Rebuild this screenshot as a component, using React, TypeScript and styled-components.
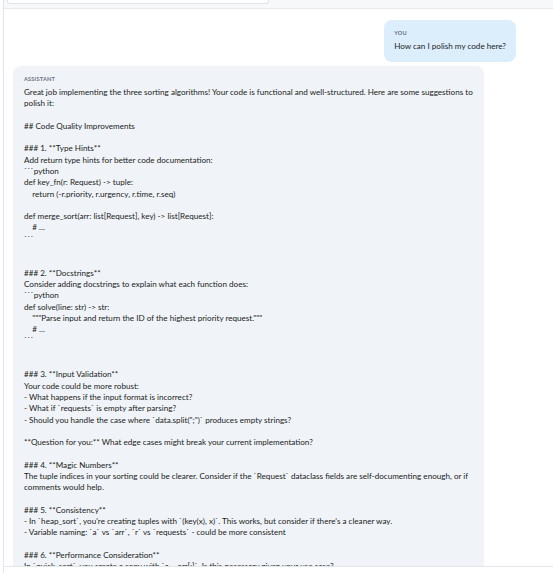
import styled, { createGlobalStyle } from "styled-components";

const GlobalStyle = createGlobalStyle`
  html, body {
    margin: 0;
    padding: 0;
    background: #ffffff;
    height: 100%;
    overflow: hidden;
  }
  #root {
    height: 100%;
  }
`;

const Shell = styled.div`
  height: 573px;
  margin-left: 3px;
  border-left: 1px solid #e2e5ea;
  display: flex;
  flex-direction: column;
  font-family: Lato, "Open Sans", sans-serif;
  color: #1a1d21;
  overflow: hidden;
`;

const TopStrip = styled.div`
  flex: none;
  height: 8px;
  background: #f7f8fa;
  border-bottom: 1px solid #e7e9ed;
  padding-left: 3px;
  display: flex;
  align-items: flex-start;
`;

const TopCard = styled.div`
  width: 260px;
  height: 3px;
  background: #ffffff;
  border: 1px solid #e1e4e9;
  border-top: none;
  border-radius: 0 0 3px 3px;
`;

const Messages = styled.div`
  flex: 1;
  min-height: 0;
  overflow: hidden;
  padding: 11px 37px 0 9px;
  display: flex;
  flex-direction: column;
  gap: 4px;
`;

const Bubble = styled.div<{ $user?: boolean }>`
  box-sizing: border-box;
  align-self: ${(p) => (p.$user ? "flex-end" : "flex-start")};
  width: ${(p) => (p.$user ? "auto" : "471px")};
  background: ${(p) => (p.$user ? "#dcedfc" : "#f0f3f8")};
  border-radius: 8px;
  padding: ${(p) => (p.$user ? "7px 10px 9px 10px" : "7px 11px 12px 11px")};
  font-size: 8.1px;
  line-height: 11.3px;
`;

const Role = styled.div`
  font-size: 5.6px;
  font-weight: 700;
  letter-spacing: 0.2px;
  text-transform: uppercase;
  color: #6b7280;
  margin-bottom: 3px;
`;

const Body = styled.div`
  white-space: pre-wrap;
  word-wrap: break-word;
`;

const Footer = styled.div`
  flex: none;
  height: 6px;
  background: #ffffff;
  border-top: 1px solid #e4e6ea;
`;

const reply = `Great job implementing the three sorting algorithms! Your code is functional and well-structured. Here are some suggestions to polish it:

## Code Quality Improvements

### 1. **Type Hints**
Add return type hints for better code documentation:
\`\`\`python
def key_fn(r: Request) -> tuple:
    return (-r.priority, r.urgency, r.time, r.seq)

def merge_sort(arr: list[Request], key) -> list[Request]:
    # ...
\`\`\`


### 2. **Docstrings**
Consider adding docstrings to explain what each function does:
\`\`\`python
def solve(line: str) -> str:
    """Parse input and return the ID of the highest priority request."""
    # ...
\`\`\`


### 3. **Input Validation**
Your code could be more robust:
- What happens if the input format is incorrect?
- What if \`requests\` is empty after parsing?
- Should you handle the case where \`data.split(";")\` produces empty strings?

**Question for you:** What edge cases might break your current implementation?

### 4. **Magic Numbers**
The tuple indices in your sorting could be clearer. Consider if the \`Request\` dataclass fields are self-documenting enough, or if comments would help.

### 5. **Consistency**
- In \`heap_sort\`, you're creating tuples with \`(key(x), x)\`. This works, but consider if there's a cleaner way.
- Variable naming: \`a\` vs \`arr\`, \`r\` vs \`requests\` - could be more consistent

### 6. **Performance Consideration**
In \`quick_sort\`, you create a copy with \`a = arr[:]\`. Is this necessary given your use case?`;

export default function App() {
  return (
    <>
      <GlobalStyle />
      <Shell>
        <TopStrip>
          <TopCard />
        </TopStrip>
        <Messages>
          <Bubble $user>
            <Role>You</Role>
            <Body>How can I polish my code here?</Body>
          </Bubble>
          <Bubble>
            <Role>Assistant</Role>
            <Body>{reply}</Body>
          </Bubble>
        </Messages>
        <Footer />
      </Shell>
    </>
  );
}
